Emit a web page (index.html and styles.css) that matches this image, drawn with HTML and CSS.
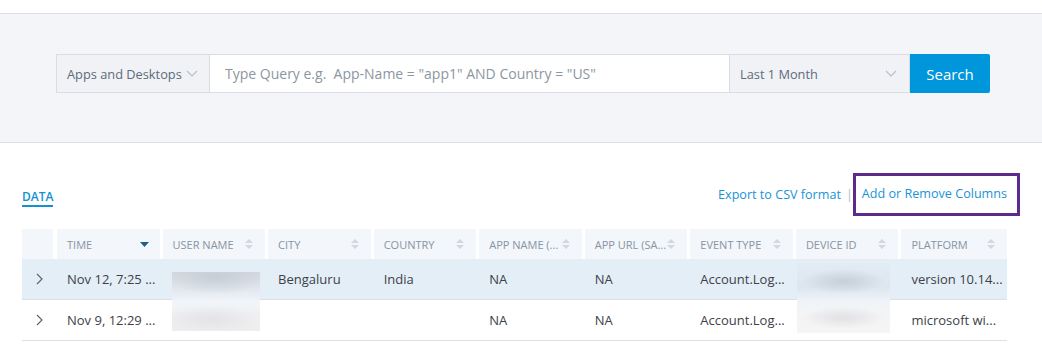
FILE: index.html
```html
<!DOCTYPE html>
<html lang="en">
<head>
    <meta charset="UTF-8">
    <title>Search</title>
    <link rel="stylesheet" href="styles.css">
</head>
<body>
<div class="search-band">
    <div class="search-bar">
        <div class="select select-scope">
            <span>Apps and Desktops</span>
            <svg class="chev" width="12" height="7" viewBox="0 0 12 7"><path d="M1 1l5 5 5-5" fill="none" stroke="#b9c0c8" stroke-width="1.2"/></svg>
        </div>
        <div class="query">Type Query e.g.&nbsp; App-Name = "app1" AND Country = "US"</div>
        <div class="select select-range">
            <span>Last 1 Month</span>
            <svg class="chev" width="12" height="7" viewBox="0 0 12 7"><path d="M1 1l5 5 5-5" fill="none" stroke="#b9c0c8" stroke-width="1.2"/></svg>
        </div>
        <button class="search-btn">Search</button>
    </div>
</div>

<div class="data">
    <div class="toolbar">
        <div class="tab">DATA</div>
        <div class="links">
            <a class="link">Export to CSV format</a>
            <span class="sep">|</span>
            <a class="link link-boxed">Add or Remove Columns</a>
        </div>
    </div>

    <div class="grid">
        <div class="th th-exp"></div>
        <div class="th">TIME <svg class="sort" width="9" height="5" viewBox="0 0 9 5"><path d="M0 0h9L4.5 5z" fill="#1d5f8c"/></svg></div>
        <div class="th">USER NAME <span class="sorts"></span></div>
        <div class="th">CITY <span class="sorts"></span></div>
        <div class="th">COUNTRY <span class="sorts"></span></div>
        <div class="th">APP NAME (... <span class="sorts"></span></div>
        <div class="th">APP URL (SA... <span class="sorts"></span></div>
        <div class="th">EVENT TYPE <span class="sorts"></span></div>
        <div class="th">DEVICE ID <span class="sorts"></span></div>
        <div class="th th-last">PLATFORM <span class="sorts"></span></div>

        <div class="row row-active">
            <div class="td td-exp"><svg width="7" height="12" viewBox="0 0 7 12"><path d="M1 1l5 5-5 5" fill="none" stroke="#5b6670" stroke-width="1.2"/></svg></div>
            <div class="td">Nov 12, 7:25 ...</div>
            <div class="td"></div>
            <div class="td">Bengaluru</div>
            <div class="td">India</div>
            <div class="td">NA</div>
            <div class="td">NA</div>
            <div class="td">Account.Log...</div>
            <div class="td"></div>
            <div class="td">version 10.14...</div>
        </div>
        <div class="row">
            <div class="td td-exp"><svg width="7" height="12" viewBox="0 0 7 12"><path d="M1 1l5 5-5 5" fill="none" stroke="#5b6670" stroke-width="1.2"/></svg></div>
            <div class="td">Nov 9, 12:29 ...</div>
            <div class="td"></div>
            <div class="td"></div>
            <div class="td"></div>
            <div class="td">NA</div>
            <div class="td">NA</div>
            <div class="td">Account.Log...</div>
            <div class="td"></div>
            <div class="td">microsoft wi...</div>
        </div>

        <div class="redact redact-user"></div>
        <div class="redact redact-device"></div>
    </div>
</div>
</body>
</html>
```

FILE: styles.css
```css
body {
    margin: 0;
    background: #fff;
    font-family: "Open Sans", "Noto Sans", sans-serif;
    color: #3b4047;
}

.search-band {
    margin-top: 13px;
    height: 88px;
    background: #f3f5f9;
    border-top: 1px solid #dde0e4;
    border-bottom: 1px solid #dde0e4;
    padding: 40px 0 0 56px;
}

.search-bar {
    display: flex;
    height: 39px;
}

.select {
    display: flex;
    align-items: center;
    justify-content: space-between;
    background: #f0f2f6;
    border: 1px solid #d9dde3;
    box-sizing: border-box;
    font-size: 12.8px;
    color: #5e6b7b;
}

.select-scope {
    width: 154px;
    padding: 0 11px 0 10px;
}

.select-range {
    width: 181px;
    padding: 0 12px 0 10px;
    border-left: 1px solid #d9dde3;
}

.query {
    width: 519px;
    display: flex;
    align-items: center;
    background: #fff;
    border-top: 1px solid #d9dde3;
    border-bottom: 1px solid #d9dde3;
    box-sizing: border-box;
    padding-left: 15px;
    font-size: 14px;
    color: #8c96a1;
    white-space: nowrap;
}

.search-btn {
    width: 80px;
    height: 39px;
    border: none;
    border-radius: 0 2px 2px 0;
    background: #0096dc;
    color: #fff;
    font-family: inherit;
    font-size: 15px;
    padding: 0;
}

.data {
    padding: 0 22px;
}

.toolbar {
    display: flex;
    justify-content: space-between;
    align-items: center;
    margin-top: 29px;
    height: 44px;
}

.tab {
    font-size: 12px;
    font-weight: 600;
    color: #1391d2;
    padding-top: 6px;
    padding-bottom: 1px;
    border-bottom: 2px solid #1391d2;
    align-self: flex-start;
    margin-top: 11px;
    line-height: 15px;
}

.links {
    display: flex;
    align-items: center;
    font-size: 12.6px;
}

.link {
    color: #1a93d4;
}

.sep {
    color: #b5bcc4;
    margin: 0 0 0 5px;
}

.link-boxed {
    border: 3px solid #5e2a8c;
    padding: 9px 10px 11px 6px;
}

.grid {
    position: relative;
    display: grid;
    grid-template-columns: 35px repeat(9, 1fr);
    width: 985px;
    margin-top: 13px;
}

.th {
    height: 30px;
    display: flex;
    align-items: center;
    justify-content: space-between;
    background: #f3f6fa;
    background-clip: padding-box;
    border-right: 3px solid #fff;
    padding: 0 12px 0 10px;
    font-size: 11px;
    color: #8794a3;
    white-space: nowrap;
}

.th-exp {
    border-right-width: 4px;
}

.th-last {
    border-right: none;
}

.sort {
    margin-right: -1px;
}

.sorts {
    display: inline-flex;
    flex-direction: column;
    gap: 2px;
}

.sorts::before,
.sorts::after {
    content: "";
    border-left: 4px solid transparent;
    border-right: 4px solid transparent;
}

.sorts::before {
    border-bottom: 4px solid #d3d8de;
}

.sorts::after {
    border-top: 4px solid #d3d8de;
}

.row {
    display: contents;
}

.td {
    height: 40px;
    display: flex;
    align-items: center;
    padding-left: 10px;
    border-bottom: 1px solid #dde0e5;
    font-size: 13px;
    color: #3c4148;
    white-space: nowrap;
}

.td-exp {
    padding-left: 14px;
}

.row-active .td {
    background: #e4eef7;
}

/* redacted cells */
.redact {
    position: absolute;
}

.redact-user {
    left: 150px;
    top: 43px;
    width: 88px;
    height: 59px;
    background:
        radial-gradient(ellipse 60% 30% at 50% 8%, rgba(196, 204, 213, 0.9), rgba(196, 204, 213, 0) 100%),
        radial-gradient(ellipse 55% 25% at 45% 80%, rgba(226, 226, 229, 0.9), rgba(226, 226, 229, 0) 100%),
        linear-gradient(180deg, #d3d9e0 0%, #e3e8ee 30%, #f1f5f9 50%, #f0f0f2 70%, #eeeeef 100%);
}

.redact-device {
    left: 775px;
    top: 34px;
    width: 93px;
    height: 70px;
    background:
        radial-gradient(ellipse 45% 18% at 50% 26%, rgba(196, 206, 216, 0.95), rgba(196, 206, 216, 0) 100%),
        radial-gradient(ellipse 45% 16% at 50% 78%, rgba(224, 224, 227, 0.95), rgba(224, 224, 227, 0) 100%),
        linear-gradient(180deg, #e3ecf4 0%, #dde6ee 35%, #eff4f8 55%, #f4f4f5 75%, #f5f5f6 100%);
}
```
